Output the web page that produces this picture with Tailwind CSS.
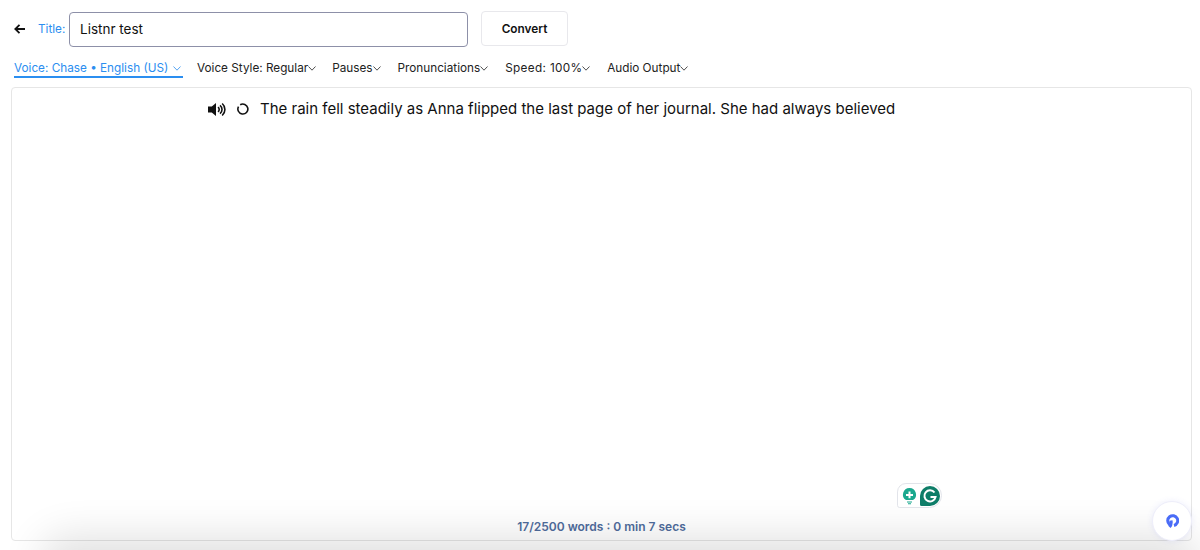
<!DOCTYPE html>
<html>
<head>
	<meta charset="utf-8">
	<script src="https://cdn.jsdelivr.net/npm/@tailwindcss/browser@4"></script>
	<title>Listnr</title>
</head>
<body class="bg-white">
	<div class="w-[1200px] h-[550px] overflow-hidden relative bg-white font-['Inter',sans-serif] text-[#111]">

		<!-- title row -->
		<div class="h-[47px] pt-[11px] flex items-start">
			<svg class="w-[12px] h-[12px] ml-[14px] mt-[12px]" viewBox="0 0 12 12" fill="none" stroke="#111" stroke-width="1.8"><path d="M11 6H1.500M5.500 1.800 1.300 6l4.200 4.200"/></svg>
			<span class="ml-[12px] mt-[11px] w-[27px] text-[11.75px] leading-[15px] text-[#2b8ef0]">Title:</span>
			<div class="ml-[4px] mt-px w-[399px] h-[35px] flex items-center pl-[10px] text-[13.5px] border border-[#8d90a8] rounded-[4px]">Listnr test</div>
			<button class="ml-[13px] w-[87px] h-[35px] pt-[2px] text-[11.8px] font-semibold border border-[#e8e8ec] rounded-[4px]">Convert</button>
		</div>

		<!-- options row -->
		<div class="mt-[11px] ml-[14px] h-[20px] flex items-start text-[11.75px] leading-[20px] text-[#222] whitespace-nowrap">
			<div class="w-[169px] h-[18px] flex items-start text-[#2b8ef0] border-b-2 border-[#2b8ef0] box-content">
				<span>Voice: Chase • English (US)</span>
				<svg class="w-[8px] h-[5px] ml-[5px] mt-[8px]" viewBox="0 0 8 5" fill="none" stroke="#2b8ef0" stroke-width="0.8"><path d="M.5.5 4 4.200 7.500.5"/></svg>
			</div>
			<div class="ml-[14px] flex items-start">
				<span>Voice Style: Regular</span>
				<svg class="w-[8px] h-[5px] mt-[8px]" viewBox="0 0 8 5" fill="none" stroke="#222" stroke-width="0.8"><path d="M.5.5 4 4.200 7.500.5"/></svg>
			</div>
			<div class="ml-[16px] flex items-start">
				<span>Pauses</span>
				<svg class="w-[8px] h-[5px] mt-[8px]" viewBox="0 0 8 5" fill="none" stroke="#222" stroke-width="0.8"><path d="M.5.5 4 4.200 7.500.5"/></svg>
			</div>
			<div class="ml-[17px] flex items-start">
				<span>Pronunciations</span>
				<svg class="w-[8px] h-[5px] mt-[8px]" viewBox="0 0 8 5" fill="none" stroke="#222" stroke-width="0.8"><path d="M.5.5 4 4.200 7.500.5"/></svg>
			</div>
			<div class="ml-[17px] flex items-start">
				<span class="w-[77px] tracking-[0.35px]">Speed: 100%</span>
				<svg class="w-[8px] h-[5px] mt-[8px]" viewBox="0 0 8 5" fill="none" stroke="#222" stroke-width="0.8"><path d="M.5.5 4 4.200 7.500.5"/></svg>
			</div>
			<div class="ml-[17px] flex items-start">
				<span>Audio Output</span>
				<svg class="w-[8px] h-[5px] mt-[8px]" viewBox="0 0 8 5" fill="none" stroke="#222" stroke-width="0.8"><path d="M.5.5 4 4.200 7.500.5"/></svg>
			</div>
		</div>

		<!-- editor -->
		<div class="mt-[9px] ml-[11px] w-[1181px] h-[454px] border border-[#e6e6e6] rounded-[4px] flex flex-col">
			<div class="pt-[10px] pl-[196px] flex items-center h-[32px] text-[15px]">
				<svg class="w-[18px] h-[15px]" viewBox="0 0 18 14" fill="#111"><path d="M0 4h3.800L8 .5v13L3.800 10H0z"/><g fill="none" stroke="#111" stroke-width="1.600"><path d="M10 4.600a3 3 0 0 1 0 4.800"/><path d="M12 2.800a5.400 5.400 0 0 1 0 8.400"/><path d="M14.200 1a8 8 0 0 1 0 12"/></g></svg>
				<svg class="w-[12px] h-[12px] ml-[11px]" viewBox="0 0 12 12" fill="none" stroke="#111" stroke-width="1.600"><path d="M3.200 1.800A5 5 0 1 1 1.500 3.600"/></svg>
				<span class="ml-[11px] whitespace-nowrap">The rain fell steadily as Anna flipped the last page of her journal. She had always believed</span>
			</div>
			<div class="flex-1"></div>
			<div class="h-[27px] text-center text-[12px] leading-[27px] font-semibold text-[#4f6c9c]">17/2500 words : 0 min 7 secs</div>
		</div>

		<!-- soft shadow at the bottom -->
		<div class="absolute left-[60px] right-[20px] top-[556px] h-[20px] rounded-[20px] shadow-[0_0_40px_20px_rgba(0,0,0,0.12)] pointer-events-none"></div>

		<!-- grammarly widget -->
		<div class="absolute left-[897px] top-[483px] w-[45px] h-[25px] flex items-center gap-[2px] pl-[3px] bg-white border border-[#e2e4ea] rounded-tl-[10px] rounded-tr-[14px] rounded-br-[14px] rounded-bl-[3px]">
			<svg class="w-[17px] h-[18px]" viewBox="0 0 17 18"><path d="M8.500 1a6.500 6.500 0 0 1 3.500 12H5A6.500 6.500 0 0 1 8.500 1z" fill="#1aa88e"/><path d="M6 14.500h5v1H6zM7 16.200h3v1H7z" fill="#1aa88e"/><path d="M7.500 4.500h2v2.500H12v2H9.500v2.200h-2V9H5V7h2.500z" fill="#fff"/></svg>
			<svg class="w-[20px] h-[20px]" viewBox="0 0 20 20"><path d="M10 0a10 10 0 1 1 0 20H1.500a1.500 1.500 0 0 1-1.500-1.500V10A10 10 0 0 1 10 0z" fill="#0e7d68"/><path d="M14.500 6.500A5.600 5.600 0 1 0 15.500 11H10.500" fill="none" stroke="#fff" stroke-width="2"/></svg>
		</div>

		<!-- chat bubble -->
		<div class="absolute left-[1152px] top-[501px] w-[40px] h-[40px] rounded-full bg-white border border-[#eeeefa] shadow-[0_0_6px_rgba(90,100,240,0.1)] flex items-center justify-center">
			<svg class="w-[14px] h-[16px]" viewBox="0 0 14 16" fill="none" stroke="#4a6cf7" stroke-width="3"><path d="M4.500 11.500A5 5 0 1 1 9 12.500M6 7.500c.5 2.500 0 5-1.500 6.500"/></svg>
		</div>
	</div>
</body>
</html>
